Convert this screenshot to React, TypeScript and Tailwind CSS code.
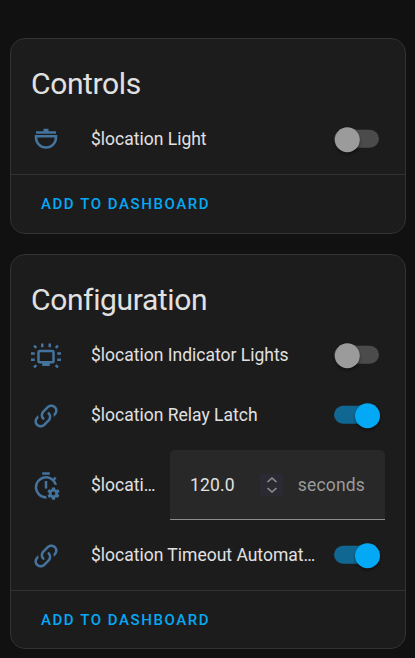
import type { ReactNode } from "react";

const LINK =
  "M10.59,13.41C11,13.8 11,14.44 10.59,14.83C10.2,15.22 9.56,15.22 9.17,14.83C7.22,12.88 7.22,9.71 9.17,7.76V7.76L12.71,4.22C14.66,2.27 17.83,2.27 19.78,4.22C21.73,6.17 21.73,9.34 19.78,11.29L18.29,12.78C18.3,11.96 18.17,11.14 17.89,10.36L18.36,9.88C19.54,8.71 19.54,6.81 18.36,5.64C17.19,4.46 15.29,4.46 14.12,5.64L10.59,9.17C9.41,10.34 9.41,12.24 10.59,13.41M13.41,9.17C13.8,8.78 14.44,8.78 14.83,9.17C16.78,11.12 16.78,14.29 14.83,16.24V16.24L11.29,19.78C9.34,21.73 6.17,21.73 4.22,19.78C2.27,17.83 2.27,14.66 4.22,12.71L5.71,11.22C5.7,12.04 5.83,12.86 6.11,13.65L5.64,14.12C4.46,15.29 4.46,17.19 5.64,18.36C6.81,19.54 8.71,19.54 9.88,18.36L13.41,14.83C14.59,13.66 14.59,11.76 13.41,10.59C13,10.2 13,9.56 13.41,9.17Z";
const COG =
  "M22.7 19.6V18.6L23.8 17.8C23.9 17.7 24 17.6 23.9 17.5L22.9 15.8C22.9 15.7 22.7 15.7 22.6 15.7L21.4 16.2C21.1 16 20.8 15.8 20.5 15.7L20.3 14.4C20.3 14.3 20.2 14.2 20.1 14.2H18.1C17.9 14.2 17.8 14.3 17.8 14.4L17.6 15.7C17.3 15.9 17.1 16 16.8 16.2L15.6 15.7C15.5 15.7 15.4 15.7 15.3 15.8L14.3 17.5C14.3 17.6 14.3 17.7 14.4 17.8L15.5 18.6V19.6L14.4 20.4C14.3 20.5 14.2 20.6 14.3 20.7L15.3 22.4C15.4 22.5 15.5 22.5 15.6 22.5L16.8 22C17 22.2 17.3 22.4 17.6 22.5L17.8 23.8C17.9 23.9 18 24 18.1 24H20.1C20.2 24 20.3 23.9 20.3 23.8L20.5 22.5C20.8 22.3 21 22.2 21.3 22L22.5 22.4C22.6 22.4 22.7 22.4 22.8 22.3L23.8 20.6C23.9 20.5 23.9 20.4 23.8 20.4L22.7 19.6M19 20.5C18.2 20.5 17.5 19.8 17.5 19S18.2 17.5 19 17.5 20.5 18.2 20.5 19 19.9 20.5 19 20.5Z";

function Icon({ children }: { children: ReactNode }) {
  return (
    <svg viewBox="0 0 24 24" className="mt-0.5 size-[30px] shrink-0 text-[#44739e]" fill="currentColor">
      {children}
    </svg>
  );
}

const LightIcon = () => (
  <Icon>
    <path d="M10 3H14V5H20V7H4V5H10ZM3 8H21V10A9 9 0 0 1 3 10ZM5 10A7 7 0 0 0 19 10Z" fillRule="evenodd" />
  </Icon>
);
const LinkIcon = () => (
  <Icon>
    <path d={LINK} />
  </Icon>
);
const AmbientIcon = () => (
  <Icon>
    <path
      fillRule="evenodd"
      d="M7 7H17A2 2 0 0 1 19 9V16A2 2 0 0 1 17 18H15V20H9V18H7A2 2 0 0 1 5 16V9A2 2 0 0 1 7 7ZM7 9V16H17V9ZM8 2H10V5H8ZM14 2H16V5H14ZM0 9H3V11H0ZM0 14H3V16H0ZM21 9H24V11H21ZM21 14H24V16H21Z"
    />
    <path
      d="M2.4 3.7L4.3 5.5M21.6 3.7L19.7 5.5M2.4 21.1L4.3 19.3M21.6 21.1L19.7 19.3"
      stroke="currentColor"
      strokeWidth="2"
    />
  </Icon>
);
const TimerIcon = () => (
  <Icon>
    <path d="M11 8H13V14H11ZM9 1H15V3H9ZM12 20A7 7 0 1 1 18.7 11H20.8C20.46 9.65 19.86 8.43 19.03 7.39L20.45 5.97C20 5.46 19.55 5 19.04 4.56L17.62 6A9 9 0 1 0 12.9 22C12.4 21.4 12.1 20.7 12 20Z" />
    <path d={COG} transform="translate(-1.1 -1.1)" />
  </Icon>
);

function Toggle({ on = false }: { on?: boolean }) {
  return (
    <span
      role="switch"
      aria-checked={on}
      className={`flex h-[17.5px] w-[45px] shrink-0 -translate-y-[0.25px] items-center rounded-full ${
        on ? "justify-end bg-[#106792]" : "bg-[#4b4b4b]"
      }`}
    >
      <span
        className={`size-[25px] shrink-0 translate-y-[0.5px] rounded-full shadow-[0_2px_3px_rgba(0,0,0,0.4)] ${
          on ? "translate-x-px bg-[#03a9f4]" : "translate-x-[0.8px] bg-[#9b9b9b]"
        }`}
      />
    </span>
  );
}

function Row({ icon, label, children, tall = false }: { icon: ReactNode; label: string; children: ReactNode; tall?: boolean }) {
  return (
    <div className={`flex items-center pl-5 ${tall ? "h-20 pr-5" : "h-[60px] pr-[26px]"}`}>
      {icon}
      <span className={`ml-[30px] min-w-0 flex-1 truncate text-[17.5px] leading-[25px] ${tall ? "mr-3.5" : "mr-[18px]"}`}>
        {label}
      </span>
      {children}
    </div>
  );
}

function Card({ title, footer, children }: { title: string; footer: string; children: ReactNode }) {
  return (
    <section className="rounded-[15px] border border-[#333333] bg-[#1c1c1c]">
      <h1 className="h-[70px] pt-[25px] pl-5 text-[30px] leading-10 tracking-[-0.375px]">{title}</h1>
      <div className="pb-[5px]">{children}</div>
      <div className={`flex items-center border-t border-[#333333] pl-[30px] ${footer}`}>
        <button className="text-[15px] font-medium tracking-[1.56px] text-[#03a9f4]">ADD TO DASHBOARD</button>
      </div>
    </section>
  );
}

export default function App() {
  return (
    <main className="flex h-[658px] w-[415px] flex-col gap-5 overflow-hidden bg-[#111111] pt-[38px] pr-[9px] pl-2.5 font-['Roboto',sans-serif] text-[#e1e1e1]">
      <Card title="Controls" footer="h-[59px]">
        <Row icon={<LightIcon />} label="$location Light">
          <Toggle />
        </Row>
      </Card>
      <Card title="Configuration" footer="h-[58px] pt-px">
        <Row icon={<AmbientIcon />} label="$location Indicator Lights">
          <Toggle />
        </Row>
        <Row icon={<LinkIcon />} label="$location Relay Latch">
          <Toggle on />
        </Row>
        <Row icon={<TimerIcon />} label="$location Timeout" tall>
          <div className="flex h-[70px] w-[215px] shrink-0 items-center rounded-t-[5px] border-b border-[#8c8c8c] bg-[#282828] px-5">
            <span className="w-[70px] text-[17.5px] leading-6 tracking-[0.16px]">120.0</span>
            <span className="flex h-[22px] w-[23px] items-center justify-center bg-[#2b2a33]">
              <svg viewBox="0 0 12 18" className="h-[18px] w-3" fill="none" stroke="#8f8f98" strokeWidth="1.6">
                <path d="M1.5 6L6 2L10.5 6M1.5 12L6 16L10.5 12" />
              </svg>
            </span>
            <span className="ml-auto text-[17.5px] leading-6 tracking-[0.16px] text-[#9b9b9b]">seconds</span>
          </div>
        </Row>
        <Row icon={<LinkIcon />} label="$location Timeout Automation">
          <Toggle on />
        </Row>
      </Card>
    </main>
  );
}
